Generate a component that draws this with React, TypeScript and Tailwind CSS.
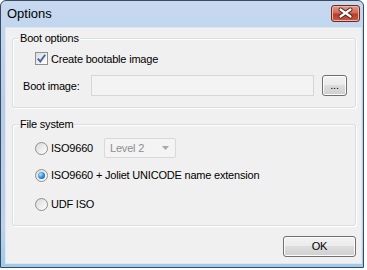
// Options dialog (Windows 7 basic look)

function CheckBox() {
  return (
    <span className="flex h-[13px] w-[13px] items-center justify-center border border-[#8e8f8f] bg-[linear-gradient(135deg,#dcdcdc,#ffffff)]">
      <svg width="11" height="11" viewBox="0 0 11 11">
        <path d="M1.8 5.6 L4.3 8.4 L9.2 1.8" fill="none" stroke="#4c64a6" strokeWidth="1.9" />
      </svg>
    </span>
  );
}

function Radio({ checked }: { checked?: boolean }) {
  return (
    <span className="flex h-[13px] w-[13px] items-center justify-center rounded-full border border-[#8e8f8f] bg-[linear-gradient(135deg,#d8d8d8,#ffffff)]">
      {checked && (
        <span className="h-[7px] w-[7px] rounded-full bg-[radial-gradient(circle_at_35%_35%,#a9e4ff,#2a86d6_55%,#0d4d8f)]" />
      )}
    </span>
  );
}

function Button({ label, className }: { label: string; className: string }) {
  return (
    <div
      className={`flex items-center justify-center rounded-[3px] border border-[#707070] bg-[linear-gradient(#f2f2f2,#ebebeb_50%,#dddddd_50%,#cfcfcf)] shadow-[inset_0_0_0_1px_#fcfcfc] ${className}`}
    >
      {label}
    </div>
  );
}

function GroupBox({
  title,
  className,
  children
}: {
  title: string;
  className: string;
  children: React.ReactNode;
}) {
  return (
    <div
      className={`relative ml-[6px] mr-[5px] rounded-[3px] border border-[#d5dfe5] shadow-[inset_1px_1px_0_#ffffff,1px_1px_0_#ffffff] ${className}`}
    >
      <span className="absolute left-[6px] top-[-8px] bg-[#f0f0f0] px-[1px] leading-[14px]">{title}</span>
      {children}
    </div>
  );
}

export default function App() {
  return (
    <div className="h-[270px] w-[367px] bg-white font-['Liberation_Sans',Arial,sans-serif] text-[11px] tracking-[-0.2px] text-black">
      <div className="flex h-[268px] w-[364px] flex-col rounded-t-[6px] border border-[#3b4a5e] bg-[linear-gradient(#c6d9f0,#b6cdea_40%,#bad2ed_85%,#9fcaec)] pb-[3px] pl-[4px] pr-[1px]">
        {/* Title bar */}
        <div className="flex h-[26px] shrink-0 items-start justify-between">
          <span className="ml-[2px] mt-[5px] text-[13px] leading-[16px] tracking-normal">Options</span>
          <div className="mr-[2px] mt-[4px] h-[17px] w-[29px] rounded-[3px] border border-[#6e2a22] bg-[linear-gradient(#e49a8a,#cf6a57_45%,#b73c2c_55%,#c95a46)] shadow-[inset_0_0_0_1px_#eeb4a6]">
            <svg width="27" height="15" viewBox="0 0 27 15">
              <path d="M8.5 3.5 L18.5 10.5 M18.5 3.5 L8.5 10.5" stroke="#4a1f19" strokeWidth="4" strokeLinecap="round" />
              <path d="M8.5 3.5 L18.5 10.5 M18.5 3.5 L8.5 10.5" stroke="#ffffff" strokeWidth="2.2" strokeLinecap="round" />
            </svg>
          </div>
        </div>

        {/* Client area */}
        <div className="flex flex-1 flex-col border border-[#dde7f3] bg-[#f0f0f0]">
          <GroupBox title="Boot options" className="mt-[10px] h-[70px]">
            <div className="ml-[22px] mt-[13px] flex h-[13px] items-center gap-[3px]">
              <CheckBox />
              <span className="leading-[14px]">Create bootable image</span>
            </div>
            <div className="ml-[10px] mt-[10px] flex h-[21px] items-center">
              <span className="w-[68px] leading-[14px]">Boot image:</span>
              <div className="h-[21px] w-[223px] border border-[#d6d6d6] bg-[#f3f3f3]" />
              <Button label="..." className="ml-[8px] h-[21px] w-[25px] pb-[2px] leading-[12px]" />
            </div>
          </GroupBox>

          <GroupBox title="File system" className="mt-[16px] h-[102px]">
            <div className="ml-[22px] mt-[13px] flex h-[20px] items-center">
              <Radio />
              <span className="ml-[3px] w-[53px] leading-[14px]">ISO9660</span>
              <div className="flex h-[20px] w-[72px] items-center justify-between rounded-[2px] border border-[#d9d9d9] bg-[#f4f4f4] pl-[5px] pr-[6px] text-[#8d8d8d]">
                <span className="leading-[14px]">Level 2</span>
                <svg width="7" height="4" viewBox="0 0 7 4">
                  <path d="M0 0 H7 L3.5 4 Z" fill="#a8a8a8" />
                </svg>
              </div>
            </div>
            <div className="ml-[22px] mt-[7px] flex h-[20px] items-center gap-[3px]">
              <Radio checked />
              <span className="leading-[14px]">ISO9660 + Joliet UNICODE name extension</span>
            </div>
            <div className="ml-[22px] mt-[9px] flex h-[20px] items-center gap-[3px]">
              <Radio />
              <span className="leading-[14px]">UDF ISO</span>
            </div>
          </GroupBox>

          <Button label="OK" className="mr-[5px] mt-[10px] h-[21px] w-[73px] self-end" />
        </div>
      </div>
    </div>
  );
}
